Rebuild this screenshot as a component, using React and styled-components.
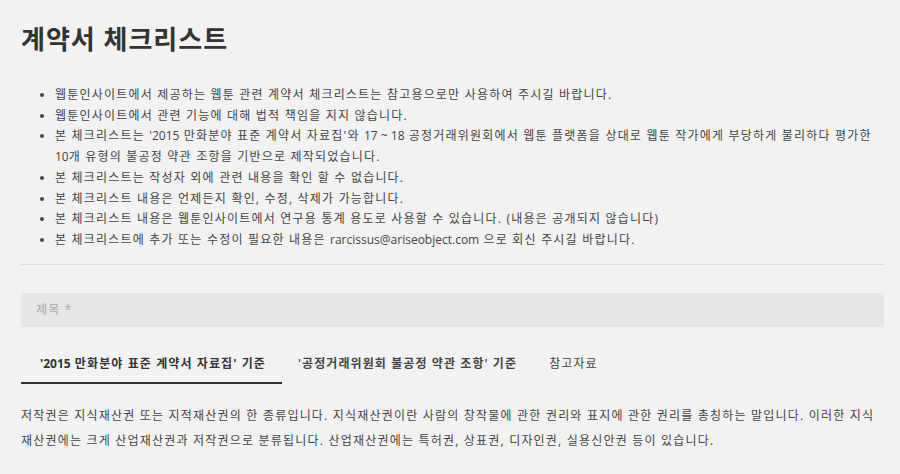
import { useState } from "react";
import styled, { createGlobalStyle } from "styled-components";

const GlobalStyle = createGlobalStyle`
  html, body {
    margin: 0;
    padding: 0;
    background: #f2f2f2;
  }
  body {
    font-family: "Open Sans", "Noto Sans CJK KR", sans-serif;
    letter-spacing: 1.2px;
    word-break: keep-all;
    color: #333;
  }
`;

// latin parts keep their normal width, only hangul gets spaced out
const Latin = styled.span`
  letter-spacing: 0;
`;

const notices = [
  "웹툰인사이트에서 제공하는 웹툰 관련 계약서 체크리스트는 참고용으로만 사용하여 주시길 바랍니다.",
  "웹툰인사이트에서 관련 기능에 대해 법적 책임을 지지 않습니다.",
  <>
    본 체크리스트는 <Latin>'2015</Latin> 만화분야 표준 계약서 자료집'와{" "}
    <Latin>17 ~ 18</Latin> 공정거래위원회에서 웹툰 플랫폼을 상대로 웹툰 작가에게
    부당하게 불리하다 평가한 <Latin>10</Latin>개 유형의 불공정 약관 조항을 기반으로
    제작되었습니다.
  </>,
  "본 체크리스트는 작성자 외에 관련 내용을 확인 할 수 없습니다.",
  "본 체크리스트 내용은 언제든지 확인, 수정, 삭제가 가능합니다.",
  "본 체크리스트 내용은 웹툰인사이트에서 연구용 통계 용도로 사용할 수 있습니다. (내용은 공개되지 않습니다)",
  <>
    본 체크리스트에 추가 또는 수정이 필요한 내용은{" "}
    <Latin>rarcissus@ariseobject.com</Latin> 으로 회신 주시길 바랍니다.
  </>,
];

const tabs = [
  <>
    <Latin>'2015</Latin> 만화분야 표준 계약서 자료집' 기준
  </>,
  "'공정거래위원회 불공정 약관 조항' 기준",
  "참고자료",
];

const App = () => {
  const [active, setActive] = useState(0);

  return (
    <Page>
      <GlobalStyle />
      <Title>계약서 체크리스트</Title>

      <NoticeList>
        {notices.map((text, i) => (
          <li key={i}>{text}</li>
        ))}
      </NoticeList>

      <Divider />

      <TitleInput placeholder="제목 *" />

      <TabBar>
        {tabs.map((label, i) => (
          <Tab key={i} $active={active === i} onClick={() => setActive(i)}>
            {label}
          </Tab>
        ))}
      </TabBar>

      <Body>
        저작권은 지식재산권 또는 지적재산권의 한 종류입니다. 지식재산권이란 사람의
        창작물에 관한 권리와 표지에 관한 권리를 총칭하는 말입니다. 이러한 지식
        재산권에는 크게 산업재산권과 저작권으로 분류됩니다. 산업재산권에는 특허권,
        상표권, 디자인권, 실용신안권 등이 있습니다.
      </Body>
    </Page>
  );
};

const Page = styled.div`
  width: 863px;
  padding: 21px 0 0 21px;
`;

const Title = styled.h1`
  margin: 0;
  font-size: 26px;
  font-weight: 700;
  letter-spacing: 1px;
  color: #333;
  line-height: 36px;
`;

const NoticeList = styled.ul`
  margin: 28px 0 0;
  padding-left: 34px;
  font-size: 12px;
  line-height: 20.7px;
  color: #444;
`;

const Divider = styled.hr`
  margin: 13px 0 0;
  border: 0;
  border-top: 1px solid #dcdcdc;
`;

const TitleInput = styled.input`
  display: block;
  box-sizing: border-box;
  width: 100%;
  height: 34px;
  margin-top: 28px;
  padding: 0 15px;
  border: 0;
  outline: none;
  background: #e6e6e6;
  font-family: inherit;
  font-size: 12px;
  letter-spacing: 1.2px;
  color: #333;

  &::placeholder {
    color: #aaa;
  }
`;

const TabBar = styled.div`
  display: flex;
  margin-top: 19px;
`;

const Tab = styled.button`
  padding: 8px 16px 10px;
  border: 0;
  border-bottom: 2px solid ${(p) => (p.$active ? "#333" : "transparent")};
  background: none;
  font-family: inherit;
  font-size: 12px;
  letter-spacing: 1.1px;
  font-weight: ${(p) => (p.$active ? 700 : 600)};
  color: ${(p) => (p.$active ? "#333" : "#444")};
  cursor: pointer;

  &:first-child {
    padding-left: 19px;
  }

  &:last-child {
    font-weight: 400;
  }
`;

const Body = styled.p`
  margin: 19px 0 0;
  font-size: 12px;
  line-height: 25px;
  color: #444;
`;

export default App;
